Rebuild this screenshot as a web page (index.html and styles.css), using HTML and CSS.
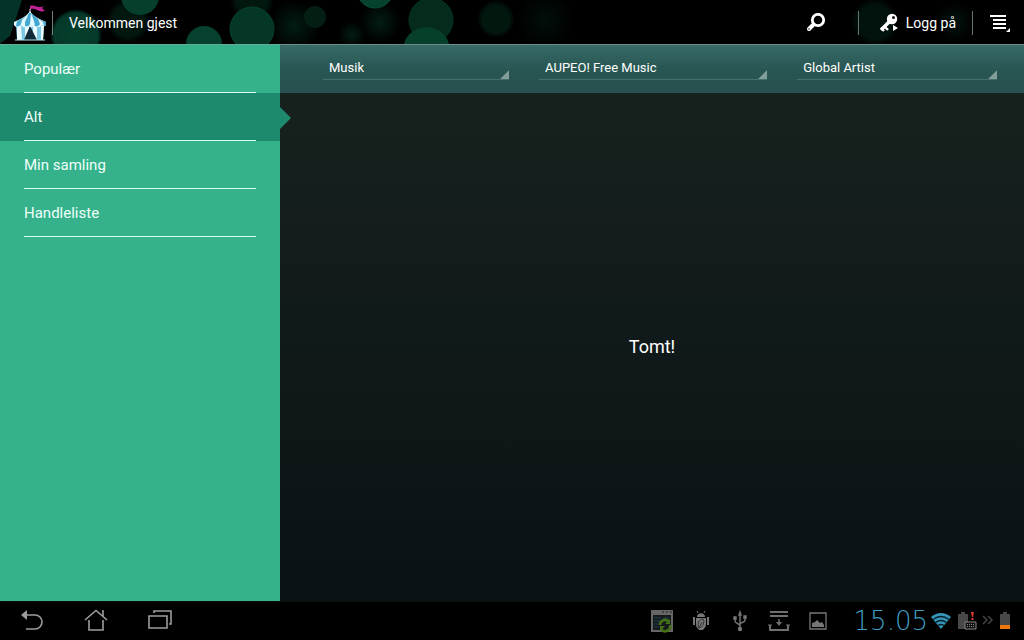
FILE: index.html
```html
<!DOCTYPE html>
<html lang="nb">
<head>
<meta charset="utf-8">
<meta name="viewport" content="width=device-width, initial-scale=1">
<title>Velkommen gjest</title>
<link rel="stylesheet" href="styles.css">
</head>
<body>
<header class="topbar">
  <svg class="bokeh" viewBox="0 0 1024 44" preserveAspectRatio="xMinYMin slice" aria-hidden="true">
    <defs>
      <radialGradient id="soft"><stop offset="0" stop-color="#04301f"/><stop offset="1" stop-color="#04301f" stop-opacity="0"/></radialGradient>
      <radialGradient id="ball"><stop offset="0" stop-color="#05402c"/><stop offset=".85" stop-color="#05382a"/><stop offset="1" stop-color="#05382a" stop-opacity="0"/></radialGradient>
      <radialGradient id="dim"><stop offset="0" stop-color="#02180f"/><stop offset=".7" stop-color="#02180f"/><stop offset="1" stop-color="#02180f" stop-opacity="0"/></radialGradient>
    </defs>
    <path d="M0 0h22L10 36 0 44z" fill="#04332a"/>
    <circle cx="128" cy="21" r="22" fill="url(#dim)"/>
    <circle cx="76" cy="35" r="26" fill="url(#ball)"/>
    <circle cx="140" cy="-4" r="19" fill="#06402d"/>
    <circle cx="204" cy="44" r="18" fill="#06402e"/>
    <circle cx="252" cy="0" r="22" fill="url(#dim)"/>
    <circle cx="252" cy="29" r="22" fill="#053726" stroke="#07432f"/>
    <circle cx="294" cy="26" r="26" fill="url(#soft)" opacity=".6"/>
    <circle cx="315" cy="17" r="11" fill="#031f14"/>
    <circle cx="375" cy="-10" r="18" fill="#06432e" stroke="#08543a"/>
    <circle cx="380" cy="22" r="21" fill="url(#soft)" opacity=".6"/>
    <circle cx="352" cy="35" r="14" fill="url(#soft)" opacity=".6"/>
    <circle cx="431" cy="20" r="22" fill="#042b1c" stroke="#043523"/>
    <path d="M404 44a23 21 0 0 1 45 0z" fill="#06402a"/>
    <circle cx="496" cy="19" r="19" fill="url(#dim)"/>
    <circle cx="545" cy="20" r="30" fill="url(#soft)" opacity=".3"/>
    <circle cx="875" cy="22" r="24" fill="url(#dim)" opacity=".8"/>
    <circle cx="955" cy="22" r="20" fill="url(#soft)" opacity=".4"/>
  </svg>
  <a class="brand" href="#" aria-label="Hjem">
    <svg width="36" height="36" viewBox="0 0 36 36" aria-hidden="true">
      <path d="M18 6V1c5-2 7 3 14 0l-2 2 3 3c-7 2-8-3-14-2" fill="#bd2394"/>
      <path d="M18 4v4" stroke="#ddd"/>
      <path d="M4 20h28l-1 15H5z" fill="#7bc9e4"/>
      <path d="M5 21h4l1 14H5zM13 21h4v14h-4zM21 21h4v14h-4zM29 21h3l-1 14h-2z" fill="#e9fbff"/>
      <path d="M18 21l-6 14h13z" fill="#102a3a"/>
      <path d="M18 6C15 11 9 14 2 17v3c2 3 5 3 7 0 2 3 5 3 7 0 2 3 5 3 7 0 2 3 5 3 7 0 2 2 3 1 4 0v-3C27 14 21 11 18 6z" fill="#e5faff"/>
      <path d="M16 9C13 12 10 14 5 16l-1 5c2 1 4 0 5-2l1-4zM17 8l-4 9v4c2 1 4 0 5-2l1-11zM19 8l3 8 1 5c2 1 4 0 5-2l-2-5zM24 12l7 5 1 4 2-1v-3c-4-1-7-3-10-5z" fill="#43a9d2"/>
      <path d="M3 35h30" stroke="#b4e4ee"/>
    </svg>
  </a>
  <h1 class="title">Velkommen gjest</h1>
  <button class="search" type="button" aria-label="Søk">
    <svg width="20" height="20" viewBox="0 0 20 20" fill="none" stroke="#fff" aria-hidden="true"><circle cx="12" cy="7" r="5.700" stroke-width="2.800"/><path d="M7 12l-4 4" stroke-width="4" stroke-linecap="round"/><circle cx="3" cy="16" r=".5" stroke="#555"/></svg>
  </button>
  <button class="login" type="button">
    <svg width="20" height="20" viewBox="0 0 20 20" aria-hidden="true"><path d="M10 9L2 17" stroke="#fff" stroke-width="3.600"/><path d="M5 13l4 4M2 15l3 3" stroke="#fff" stroke-width="2.400"/><circle cx="13" cy="6" r="5.200" fill="#fff"/><circle cx="14.500" cy="4.500" r="1.500" fill="#111"/><path d="M14 12l5 3-5 3z" fill="#fff"/></svg>
    <span>Logg på</span>
  </button>
  <button class="menu" type="button" aria-label="Meny">
    <svg width="22" height="20" viewBox="0 0 22 20" fill="none" stroke="#fff" stroke-width="2" aria-hidden="true"><path d="M1 3h16M4 7h13M4 11h13M4 15h13"/><path d="M21 15v4h-4z" fill="#fff" stroke="none"/></svg>
  </button>
</header>

<div class="content">
  <nav class="sidebar">
    <a class="entry" href="#"><span>Populær</span></a>
    <a class="entry active" href="#" aria-current="page"><span>Alt</span></a>
    <a class="entry" href="#"><span>Min samling</span></a>
    <a class="entry" href="#"><span>Handleliste</span></a>
  </nav>
  <main class="main">
    <form class="filters">
      <select class="filter category" aria-label="Kategori"><option>Musik</option></select>
      <select class="filter provider" aria-label="Tilbyder"><option>AUPEO! Free Music</option></select>
      <select class="filter artist" aria-label="Artist"><option>Global Artist</option></select>
    </form>
    <p class="empty">Tomt!</p>
  </main>
</div>

<footer class="system">
  <div class="keys">
    <button type="button" aria-label="Tilbake"><svg width="24" height="24" viewBox="0 0 24 24" fill="none" stroke="#9c9c9c" stroke-width="1.600"><path d="M6 6h9a7 7 0 0 1 0 14H6"/><path d="M7 1v10L1 6z" fill="#9c9c9c" stroke="none"/></svg></button>
    <button type="button" aria-label="Startside"><svg width="24" height="24" viewBox="0 0 24 24" fill="none" stroke="#9c9c9c" stroke-width="1.600"><path d="M1 11L12 1.500 23 11M5 11v10h14V11M19 1v6"/></svg></button>
    <button type="button" aria-label="Nylige apper"><svg width="24" height="24" viewBox="0 0 24 24" fill="none" stroke="#9c9c9c" stroke-width="1.600"><path d="M1 7h18v12H1zM6 4V2h17v13h-2"/></svg></button>
  </div>
  <div class="notices">
    <svg width="24" height="24" viewBox="0 0 24 24"><path d="M1 1h22v22H1z" fill="#666"/><path d="M3 6h18v15H3z" fill="#141a1c"/><path d="M12 3h2m2 0h2m2 0h2" stroke="#222"/><path d="M4 9h7m2 0h6M4 12h7M4 15h5M4 18h5" stroke="#243f50"/><path d="M10 16a5 5 0 0 1 9-3M20 16a5 5 0 0 1-9 4" fill="none" stroke="#447016" stroke-width="2.600"/><path d="M20 10v5h-5zM10 22v-5h5z" fill="#447016"/></svg>
    <svg width="24" height="24" viewBox="0 0 24 24"><path d="M7 9h10v6c0 4-2 4-3 6h-4c-1-2-3-2-3-6zM8 8c0-5 8-5 8 0zM4 8h2v8H4zM18 8h2v8h-2z" fill="#777"/><path d="M9 4L8 2m7 2l1-2" stroke="#777"/><path d="M10 19c-2-5 0-9 4-9 2 3 0 8-4 9zm0 0l3-6" stroke="#333" fill="none"/></svg>
    <svg width="24" height="24" viewBox="0 0 24 24" fill="none" stroke="#777" stroke-width="1.400"><path d="M12 4v15M7 9v3c0 3 5 2 5 5M17 8v3c0 3-5 2-5 4"/><path d="M12 3l1 3h-2zM6 8h2v2H6zM16 7h2v2h-2z" fill="#777"/><circle cx="12" cy="20" r="1.500" fill="#777"/></svg>
    <svg width="24" height="24" viewBox="0 0 24 24" fill="none" stroke="#707070" stroke-width="2"><path d="M3 3h18M3 7h18M3 16v5h18v-5"/><path d="M1 16h4m14 0h4" stroke-width="1"/><path d="M12 10v4" stroke-width="1.500"/><path d="M9 13h6l-3 4z" fill="#707070" stroke="none"/></svg>
    <svg width="24" height="24" viewBox="0 0 24 24" fill="none" stroke="#777" stroke-width="1.300"><path d="M4 4h16v16H4z"/><path d="M6 18v-4l3-1 2-2 3 3 2-1 2 3v2z" fill="#777" stroke="none"/></svg>
  </div>
  <time class="clock" datetime="15:05">15.05</time>
  <div class="status">
    <svg width="22" height="20" viewBox="0 0 22 20"><path d="M1 6q10-8 20 0L11 18z" fill="#3695b8"/><path d="M3 8.500q8-6 16 0M5.500 11.500q5.500-4 11 0M8 14.500q3-2 6 0" fill="none" stroke="#06202b" stroke-width="1.300"/></svg>
    <svg width="20" height="20" viewBox="0 0 20 20"><path d="M1 3h3V1h4v2h3v15H1z" fill="#484848"/><path d="M8 11h11v7H8z" fill="#111" stroke="#888"/><path d="M10 13.500h8M10 15.500h8" stroke="#888" stroke-dasharray="1 1"/><path d="M14 1h3l-1 5h-1zM14.500 7h2v2h-2z" fill="#e23a30"/></svg>
    <svg width="12" height="20" viewBox="0 0 12 20" fill="none" stroke="#444" stroke-width="1.500"><path d="M1 5l4 4-4 4M6 5l4 4-4 4"/></svg>
    <svg width="12" height="20" viewBox="0 0 12 20"><path d="M1 3h3V1h4v2h3v12H1z" fill="#484848"/><path d="M1 14h10v4H1z" fill="#ef760b"/></svg>
  </div>
</footer>
</body>
</html>
```
FILE: styles.css
```css
* { box-sizing: border-box; }

body {
  margin: 0;
  min-height: 100vh;
  display: flex;
  flex-direction: column;
  background: #000;
  color: #fff;
  font-family: Roboto, "Noto Sans", sans-serif;
  font-size: 15px;
  line-height: 20px;
}

button {
  display: flex;
  align-items: center;
  justify-content: center;
  padding: 0;
  border: 0;
  background: none;
  color: inherit;
  font: inherit;
}

svg { display: block; flex: none; }

.topbar {
  position: relative;
  isolation: isolate;
  display: flex;
  align-items: center;
  height: 44px;
  padding-top: 1px;
  overflow: hidden;
  font-size: 14px;
}

.bokeh {
  position: absolute;
  inset: 0;
  z-index: -1;
  width: 100%;
  height: 44px;
}

.brand {
  display: flex;
  justify-content: flex-end;
  align-items: center;
  width: 53px;
  height: 24px;
  padding-right: 4px;
  border-right: 1px solid #71807b;
}

.title {
  margin: 0 auto 0 0;
  padding: 0 16px;
  font-size: 14px;
  font-weight: 400;
}

.search { width: 84px; height: 42px; }

.login {
  gap: 7px;
  height: 24px;
  padding: 0 16px 0 20px;
  border: solid #65736e;
  border-width: 0 1px;
}

.menu { width: 51px; height: 42px; padding-left: 2px; }

.content { display: flex; flex: 1; }

.sidebar {
  flex: none;
  width: 280px;
  border-top: 1px solid #62ae95;
  background: #35b28c;
}

.entry {
  position: relative;
  display: block;
  height: 48px;
  padding: 0 24px;
  color: #effff9;
  text-decoration: none;
}

.entry span {
  display: block;
  height: 48px;
  border-bottom: 1px solid #d6fff1;
  line-height: 49px;
}

.active { background: #1d8a6e; }

.active::after {
  content: "";
  position: absolute;
  left: 100%;
  top: 14px;
  border: 11px solid transparent;
  border-left-color: #1d8a6e;
  border-right-width: 0;
}

.main {
  display: flex;
  flex: 1;
  flex-direction: column;
  background: linear-gradient(#18231f, #0a1115);
}

.filters {
  display: flex;
  gap: 30px;
  height: 49px;
  padding: 12px 27px 13px 43px;
  border-top: 1px solid #718e8b;
  background: linear-gradient(#376b67, #285653 50%, #28514f);
}

.filter {
  appearance: none;
  min-width: 0;
  height: 23px;
  padding: 0 12px 0 6px;
  border: 0;
  border-bottom: 1px solid #43706c;
  border-radius: 0;
  background: linear-gradient(135deg, transparent 48%, #819e9b 54%) right bottom / 10px 10px no-repeat border-box;
  color: #fff;
  font: 13px/22px Roboto, "Noto Sans", sans-serif;
}

.category { flex: 184 1 0; }
.provider { flex: 230 1 0; }
.artist { flex: 199 1 0; }

.empty {
  display: flex;
  flex: 1;
  align-items: center;
  justify-content: center;
  margin: 0;
  font-size: 18px;
}

.system {
  display: flex;
  align-items: center;
  height: 39px;
  border-top: 1px solid #08110f;
  background: #000;
}

.keys {
  display: flex;
  gap: 40px;
  padding-left: 20px;
  margin-right: auto;
}

.notices { display: flex; gap: 15px; }

.clock {
  min-width: 80px;
  margin-left: 18px;
  color: #3e9fc1;
  font-family: "DejaVu Sans ExtraLight", "DejaVu Sans", sans-serif;
  font-size: 26px;
  font-weight: 200;
  text-align: right;
}

.status {
  display: flex;
  align-items: center;
  gap: 5px;
  padding: 0 13px 0 2px;
}
```
